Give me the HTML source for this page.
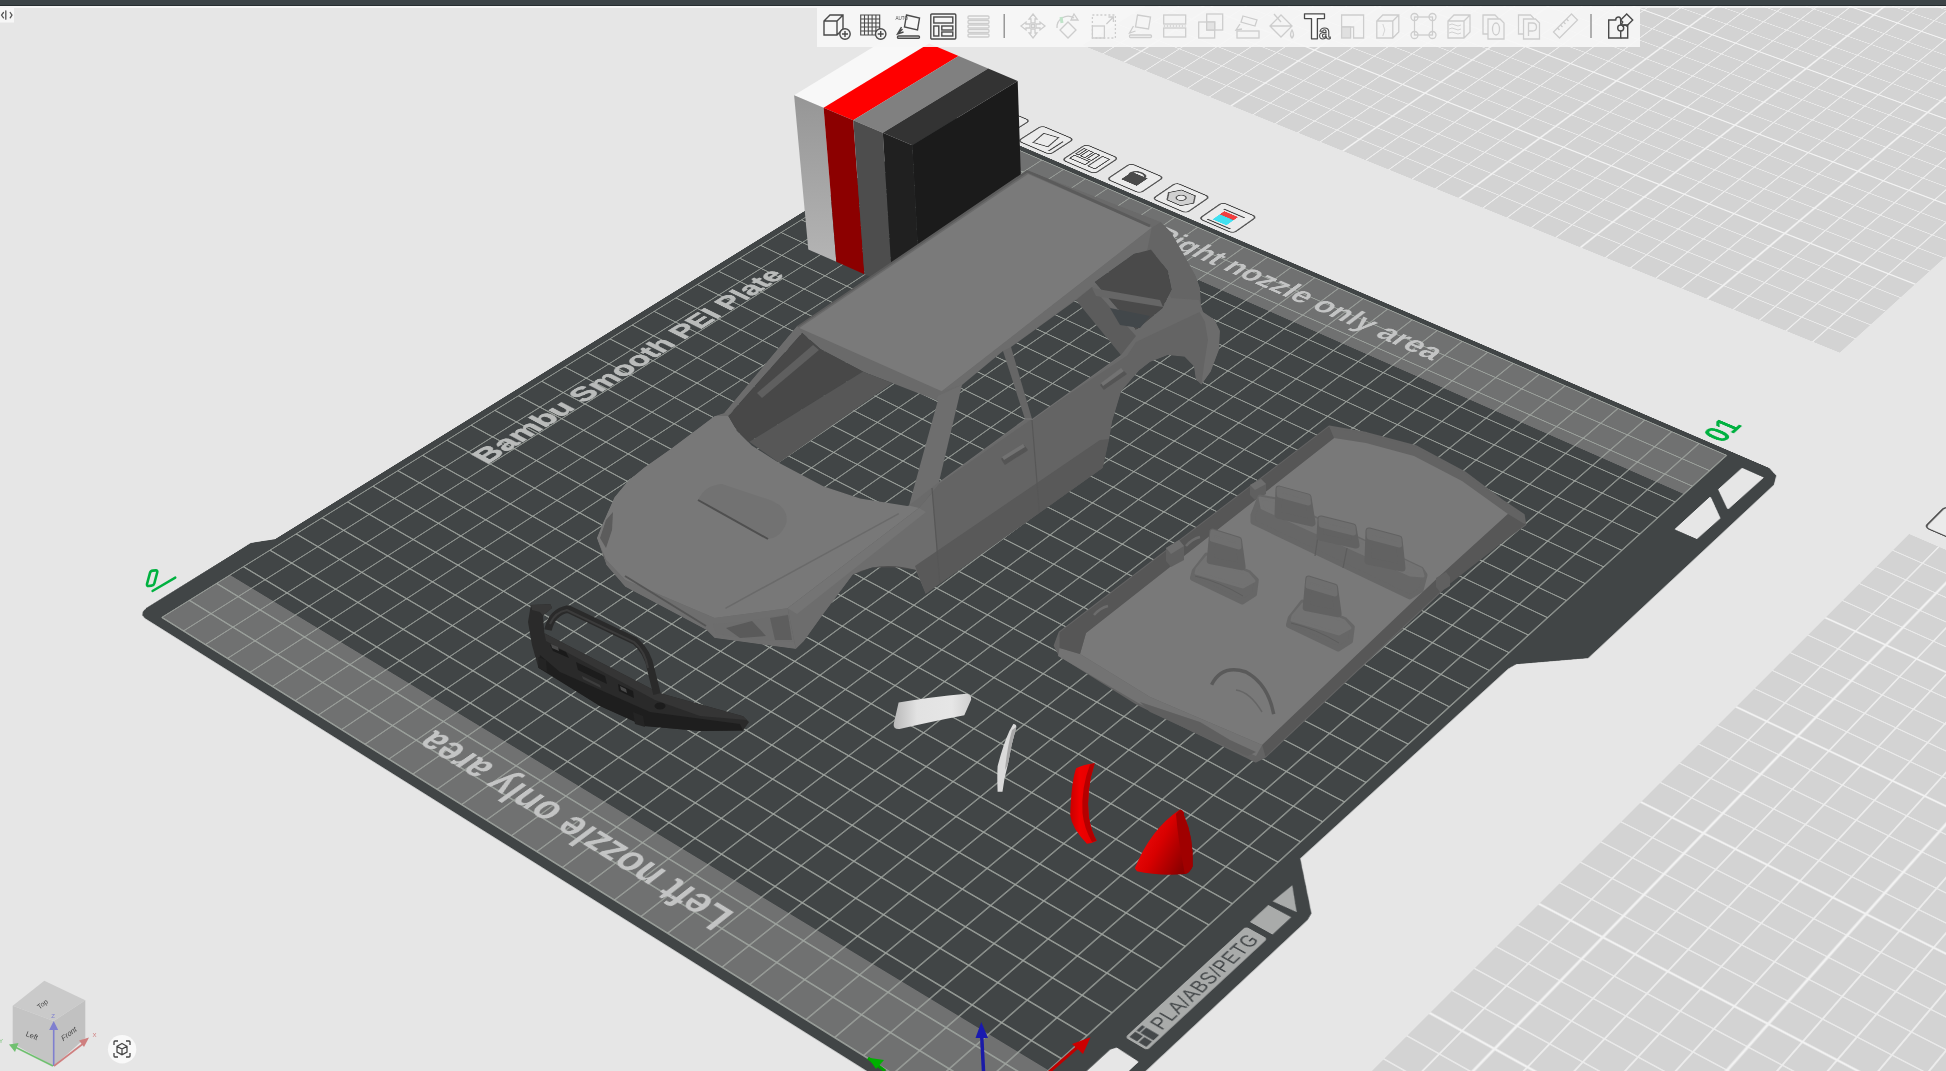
<!DOCTYPE html>
<html><head><meta charset="utf-8"><style>
html,body{margin:0;padding:0;width:1946px;height:1071px;overflow:hidden;}
#root{position:relative;width:1946px;height:1071px;overflow:hidden;}
body{width:1946px;height:1071px;overflow:hidden;position:relative;background:#e6e6e6;font-family:"Liberation Sans",sans-serif;}
#plate{position:absolute;left:0;top:0;width:3320px;height:3120px;transform-origin:0 0;transform:matrix3d(0.7177139837,-0.3331416864,0,0.0001572874842,0.5184865867,0.2595511695,0,-0.0001243992906,0,0,1,0,-7.450086953,615.2132709,0,1);}
#tb{position:absolute;left:817px;top:7px;width:823px;height:40px;background:rgba(246,246,246,0.93);}
#topbar{position:absolute;left:0;top:0;width:1946px;height:5px;background:#3c4447;border-bottom:1px solid #262d30;}
#tline{position:absolute;left:0;top:6px;width:1946px;height:2px;background:rgba(250,250,250,0.75);}
</style></head><body><div id="root">
<div id="plate"><svg width="3320" height="3120" viewBox="-30 -360 830 780" style="display:block"><g transform="scale(1,-1)"><rect x="420" y="0" width="350" height="320" fill="#d3d3d3"/><path d="M430,0V320M440,0V320M450,0V320M460,0V320M480,0V320M490,0V320M500,0V320M510,0V320M530,0V320M540,0V320M550,0V320M560,0V320M580,0V320M590,0V320M600,0V320M610,0V320M630,0V320M640,0V320M650,0V320M660,0V320M680,0V320M690,0V320M700,0V320M710,0V320M730,0V320M740,0V320M750,0V320M760,0V320M420,10H770M420,20H770M420,30H770M420,40H770M420,60H770M420,70H770M420,80H770M420,90H770M420,110H770M420,120H770M420,130H770M420,140H770M420,160H770M420,170H770M420,180H770M420,190H770M420,210H770M420,220H770M420,230H770M420,240H770M420,260H770M420,270H770M420,280H770M420,290H770M420,310H770" stroke="#ececec" stroke-width="0.45" fill="none"/><path d="M470,0V320M520,0V320M570,0V320M620,0V320M670,0V320M720,0V320M420,50H770M420,100H770M420,150H770M420,200H770M420,250H770M420,300H770" stroke="#f2f2f2" stroke-width="0.75" fill="none"/><rect x="0" y="-384" width="350" height="320" fill="#d3d3d3"/><path d="M10,-384V-64M20,-384V-64M30,-384V-64M40,-384V-64M60,-384V-64M70,-384V-64M80,-384V-64M90,-384V-64M110,-384V-64M120,-384V-64M130,-384V-64M140,-384V-64M160,-384V-64M170,-384V-64M180,-384V-64M190,-384V-64M210,-384V-64M220,-384V-64M230,-384V-64M240,-384V-64M260,-384V-64M270,-384V-64M280,-384V-64M290,-384V-64M310,-384V-64M320,-384V-64M330,-384V-64M340,-384V-64M0,-374H350M0,-364H350M0,-354H350M0,-344H350M0,-324H350M0,-314H350M0,-304H350M0,-294H350M0,-274H350M0,-264H350M0,-254H350M0,-244H350M0,-224H350M0,-214H350M0,-204H350M0,-194H350M0,-174H350M0,-164H350M0,-154H350M0,-144H350M0,-124H350M0,-114H350M0,-104H350M0,-94H350M0,-74H350" stroke="#ececec" stroke-width="0.45" fill="none"/><path d="M50,-384V-64M100,-384V-64M150,-384V-64M200,-384V-64M250,-384V-64M300,-384V-64M0,-334H350M0,-284H350M0,-234H350M0,-184H350M0,-134H350M0,-84H350" stroke="#f2f2f2" stroke-width="0.75" fill="none"/><polygon points="-3.30,-19.30 -3.30,323.50 -2.90,325.30 -1.80,326.50 0.00,327.10 38.70,327.30 44.40,323.00 352.50,323.00 352.50,-13.80 350.50,-17.50 346.00,-19.30 242.00,-19.30 227.00,-4.50 224.00,-3.80 124.80,-3.80 110.00,-18.70 107.50,-19.30" fill="#414546"/><polygon points="347.10,-7.40 347.00,-14.70 327.20,-14.40 333.60,-7.30" fill="#e6e6e6" stroke="#e6e6e6" stroke-width="0.6" stroke-linejoin="round"/><polygon points="328.40,-7.30 321.50,-14.80 308.80,-14.60 308.70,-7.30" fill="#e6e6e6" stroke="#e6e6e6" stroke-width="0.6" stroke-linejoin="round"/><polygon points="39.90,-8.00 41.20,-8.70 40.90,-15.70 20.00,-15.70 20.00,-8.00" fill="#e6e6e6" stroke="#e6e6e6" stroke-width="0.6" stroke-linejoin="round"/><rect x="0" y="0" width="25" height="320" fill="#707171"/><rect x="325" y="0" width="25" height="320" fill="#707171"/><path d="M0,0V320M10,0V320M20,0V320M30,0V320M40,0V320M50,0V320M60,0V320M70,0V320M80,0V320M90,0V320M100,0V320M110,0V320M120,0V320M130,0V320M140,0V320M150,0V320M160,0V320M170,0V320M180,0V320M190,0V320M200,0V320M210,0V320M220,0V320M230,0V320M240,0V320M250,0V320M260,0V320M270,0V320M280,0V320M290,0V320M300,0V320M310,0V320M320,0V320M330,0V320M340,0V320M350,0V320M0,0H350M0,10H350M0,20H350M0,30H350M0,40H350M0,50H350M0,60H350M0,70H350M0,80H350M0,90H350M0,100H350M0,110H350M0,120H350M0,130H350M0,140H350M0,150H350M0,160H350M0,170H350M0,180H350M0,190H350M0,200H350M0,210H350M0,220H350M0,230H350M0,240H350M0,250H350M0,260H350M0,270H350M0,280H350M0,290H350M0,300H350M0,310H350M0,320H350" stroke="#a1a6a1" stroke-width="0.42" fill="none"/><rect x="45.5" y="-15.2" width="50" height="7.2" rx="1" fill="#a9abaa"/><polygon points="97.5,-7.8 105.5,-7.8 105.6,-15.3 97.5,-15.3" fill="#a9abaa"/><polygon points="107.3,-7.9 115.3,-8.3 108,-15.3" fill="#a9abaa"/><text transform="matrix(1,0,0,-1,175.5,300.6)" x="0" y="0" font-family="Liberation Sans" font-weight="bold" font-size="11.2" fill="#b9bbba" text-anchor="middle" textLength="133" lengthAdjust="spacingAndGlyphs" stroke="#b9bbba" stroke-width="0.3">Bambu Smooth PEI Plate</text><text transform="matrix(0,-1,-1,0,335,160.5)" x="0" y="0" font-family="Liberation Sans" font-weight="bold" font-size="12.5" fill="#c3c4c4" text-anchor="middle" textLength="118" lengthAdjust="spacingAndGlyphs" >Right nozzle only area</text><text transform="matrix(0,1,1,0,16.3,160)" x="0" y="0" font-family="Liberation Sans" font-weight="bold" font-size="12.5" fill="#c3c4c4" text-anchor="middle" textLength="118" lengthAdjust="spacingAndGlyphs" >Left nozzle only area</text><text transform="matrix(1,0,0,-1,73.5,-13.9)" x="0" y="0" font-family="Liberation Sans" font-weight="normal" font-size="6.2" fill="#44484a" text-anchor="middle" textLength="41" lengthAdjust="spacingAndGlyphs" letter-spacing="0.3">PLA/ABS/PETG</text><g fill="#44484a"><rect x="46.3" y="-14.3" width="2.3" height="2.5"/><rect x="46.3" y="-11.3" width="2.3" height="2.5"/><rect x="49.1" y="-14.3" width="2.3" height="4.2"/><rect x="49.1" y="-9.7" width="2.3" height="0.9"/></g><g><rect x="354.5" y="300.6" width="13" height="14.8" rx="1.6" fill="#ebebeb" stroke="#4a4a4a" stroke-width="0.55"/></g><g><rect x="354.5" y="280.1" width="13" height="14.8" rx="1.6" fill="#ebebeb" stroke="#4a4a4a" stroke-width="0.55"/><path d="M358,284 L365,285 L364,291 L357,290 Z" fill="none" stroke="#4a4a4a" stroke-width="0.5"/><path d="M364,282 L356,282" stroke="#4a4a4a" stroke-width="0.6"/></g><g><rect x="354.5" y="259.6" width="13" height="14.8" rx="1.6" fill="#ebebeb" stroke="#4a4a4a" stroke-width="0.55"/><g fill="none" stroke="#4a4a4a" stroke-width="0.5"><rect x="357" y="261.5" width="8" height="3.2"/><rect x="357" y="266" width="2.5" height="7"/><rect x="360.5" y="266" width="4.5" height="2"/><rect x="360.5" y="269" width="4.5" height="2"/><rect x="360.5" y="272" width="4.5" height="1.2"/></g></g><g><rect x="354.5" y="239.1" width="13" height="14.8" rx="1.6" fill="#ebebeb" stroke="#4a4a4a" stroke-width="0.55"/><rect x="357.5" y="243" width="6" height="7" fill="#4a4a4a"/><path d="M362,250 q3,0 3,-3 q0,-3 -3,-3" fill="none" stroke="#4a4a4a" stroke-width="0.8"/></g><g><rect x="354.5" y="218.6" width="13" height="14.8" rx="1.6" fill="#ebebeb" stroke="#4a4a4a" stroke-width="0.55"/><polygon points="361,220.5 365,223 365,229 361,231.5 357,229 357,223" fill="#d0d0d0" stroke="#4a4a4a" stroke-width="0.5"/><circle cx="361" cy="226" r="1.7" fill="#ebebeb" stroke="#4a4a4a" stroke-width="0.45"/></g><g><rect x="354.5" y="198.1" width="13" height="14.8" rx="1.6" fill="#ebebeb" stroke="#4a4a4a" stroke-width="0.55"/><rect x="357" y="203" width="4" height="6" fill="#40e0f0"/><rect x="361" y="203" width="2.5" height="6" fill="#f04040"/><path d="M356,200.5 V210.5 M364.5,201 V210" stroke="#4a4a4a" stroke-width="0.6"/><circle cx="361" cy="204" r="0.1"/></g><g><rect x="355.8" y="-80.9" width="13" height="14.8" rx="1.6" fill="#ebebeb" stroke="#4a4a4a" stroke-width="0.55"/><path d="M358,-76 L364,-70" stroke="#4a4a4a" stroke-width="0.6"/></g><text transform="matrix(1,0,0,-1,360.5,4.2)" x="0" y="0" font-family="Liberation Sans" font-weight="bold" font-size="11" fill="#00b140" text-anchor="middle" textLength="12" lengthAdjust="spacingAndGlyphs" >01</text></g></svg></div>
<svg id="obj" width="1946" height="1071" style="position:absolute;left:0;top:0"><path d="M147,584 L150,572.8 Q150.5,570.8 153,570.6 L155.8,570.4 Q157.8,570.4 157.2,572.5 L154.3,583.5 Q153.8,585.4 151.6,585.6 L148.8,586 Q146.6,586.2 147,584 Z" fill="none" stroke="#00b140" stroke-width="2.6"/><path d="M152.5,591 L175.3,577.6" stroke="#00b140" stroke-width="2.4" stroke-linecap="round"/><path d="M983.5,1071 L981.6,1034" stroke="#1a1aa8" stroke-width="3.5"/><polygon points="975.5,1038.0 981.3,1021.9 988.0,1038.0" fill="#1a1ab0" /><path d="M1040,1080 L1080,1045" stroke="#c00000" stroke-width="3"/><polygon points="1072.0,1044.0 1090.5,1037.3 1083.0,1054.0" fill="#cc0000" /><path d="M868,1058 L885,1071" stroke="#00a000" stroke-width="3"/><polygon points="868.3,1057.8 884.0,1060.0 876.0,1069.0" fill="#00b000" /><polygon points="530.9,605.0 550.3,604.2 552.0,608.0 542.9,615.4 544.4,633.3 659.4,693.1 743.1,716.3 749.0,722.0 743.1,730.5 700.0,731.0 644.5,726.0 600.0,706.0 538.4,667.7 532.0,645.0 528.0,622.0" fill="#2a2a2a" /><polygon points="544.4,633.3 659.4,693.1 743.1,716.3 747.0,720.0 700.0,716.0 655.0,700.0 546.0,641.0" fill="#353535" /><polygon points="530.9,605.0 550.3,604.2 552.0,608.0 542.9,615.4 540.0,612.0 532.0,610.0" fill="#383838" /><polygon points="538.4,667.7 600.0,706.0 644.5,726.0 700.0,731.0 743.1,730.5 740.0,724.0 650.0,712.0 560.0,672.0 540.0,655.0" fill="#1e1e1e" /><polygon points="550.0,645.0 566.0,652.0 569.0,658.0 553.0,651.0" fill="#1a1a1a" /><polygon points="551.0,644.0 558.0,647.0 559.0,651.0 552.0,648.0" fill="#4a4a4a" /><polygon points="576.0,662.0 605.0,676.0 607.0,684.0 578.0,670.0" fill="#1c1c1c" /><polygon points="582.0,676.0 600.0,685.0 601.0,688.0 583.0,679.0" fill="#3c3c3c" /><polygon points="618.0,684.0 633.0,691.0 634.0,698.0 619.0,691.0" fill="#1a1a1a" /><polygon points="620.0,686.0 626.0,689.0 627.0,693.0 621.0,690.0" fill="#4a4a4a" /><ellipse cx="660" cy="706" rx="5.5" ry="3.5" fill="#1c1c1c"/><path d="M548,630 Q552,612 568,609 L635,641 Q648,652 651,670 L657,694" stroke="#2a2a2a" stroke-width="7.5" fill="none" stroke-linejoin="round"/><path d="M550,624 Q555,612 567,610 L634,642 Q645,651 648,668" stroke="#3b3b3b" stroke-width="2" fill="none"/><polygon points="538.0,657.0 546.0,660.0 547.0,672.0 539.0,668.0" fill="#242424" /><polygon points="633.0,712.0 643.0,716.0 645.0,727.0 635.0,724.0" fill="#242424" /><defs><linearGradient id="wg" x1="0" y1="0" x2="1" y2="0"><stop offset="0" stop-color="#b9b9b9"/><stop offset="0.3" stop-color="#e2e2e2"/><stop offset="0.75" stop-color="#e6e6e6"/><stop offset="1" stop-color="#cfcfcf"/></linearGradient><linearGradient id="rg2" x1="0" y1="0" x2="1" y2="0.6"><stop offset="0" stop-color="#ff1010"/><stop offset="0.55" stop-color="#d80000"/><stop offset="1" stop-color="#8c0000"/></linearGradient><linearGradient id="rg1" x1="0" y1="0" x2="1" y2="0"><stop offset="0" stop-color="#c80000"/><stop offset="0.35" stop-color="#f00000"/><stop offset="1" stop-color="#e00000"/></linearGradient></defs><path d="M898.6,702.5 Q930,697 966.3,693.7 Q971.5,694 971.2,699.6 L964.3,715.3 Q930,722 899.6,729 Q893,729.5 893.7,724 Z" fill="url(#wg)"/><path d="M1013.3,724.1 Q1016.5,724.5 1016.3,727 Q1011,745 1008,764 Q1004,778 1002.5,791.8 L997.6,791.8 Q997,776 997.6,766.3 Q1003,745 1009.4,731 Z" fill="#dadada"/><path d="M1016.3,727 Q1011,745 1008,764 L1005,770 Q1007,748 1012,730 Z" fill="#a8a8a8"/><path d="M1076.1,768.2 Q1083.9,764.3 1094.7,763.3 Q1085.9,789.8 1088.8,817.3 Q1091.8,832.9 1096.7,840.8 Q1091.8,843.7 1086.9,843.7 Q1072.2,829 1070.2,815.3 Q1071.2,782 1076.1,768.2 Z" fill="url(#rg1)"/><path d="M1094.7,763.3 Q1085.9,789.8 1088.8,817.3 Q1091.8,832.9 1096.7,840.8 L1092,842 Q1084,828 1082.5,813 Q1081,788 1090,764.5 Z" fill="#b40000"/><path d="M1134.9,868.2 Q1150.6,829 1180,809.4 Q1184.9,811.4 1183.9,815.3 Q1193.7,836.9 1192.7,866.3 Q1189.8,873.1 1184.9,874.1 Q1158.4,876.1 1136.9,871.2 Z" fill="url(#rg2)"/><path d="M1180,809.4 Q1184.9,811.4 1183.9,815.3 Q1193.7,836.9 1192.7,866.3 Q1189.8,873.1 1184.9,874.1 Q1178,840 1176,814 Z" fill="#a00000"/><polygon points="1329.2,426.5 1366.8,433.1 1415.8,446.1 1464.8,472.3 1504.0,501.7 1523.7,514.8 1525.3,524.6 1455.0,573.6 1442.0,590.0 1435.4,596.5 1265.5,756.6 1255.7,761.5 1245.9,756.6 1138.0,704.3 1059.6,655.3 1054.7,645.5 1059.6,632.4" fill="#636363" stroke="#636363" stroke-width="2" stroke-linejoin="round"/><polygon points="1086.0,633.0 1334.0,438.0 1366.0,443.0 1414.0,456.0 1462.0,481.0 1508.0,514.0 1438.7,576.9 1262.2,745.0 1150.0,697.0 1080.0,654.0" fill="#797979" /><polygon points="1059.6,648.0 1080.0,654.0 1150.0,697.0 1262.2,745.0 1256.0,756.0 1140.0,704.0 1058.0,656.0" fill="#737373" /><polygon points="1140.0,702.0 1200.0,722.0 1230.0,740.0 1256.0,752.0 1248.0,756.0 1200.0,735.0 1150.0,712.0" fill="#5f5f5f" /><polygon points="1508.0,514.0 1525.3,524.6 1442.0,590.0 1265.5,756.6 1262.2,745.0 1438.7,576.9" fill="#575757" /><polygon points="1059.6,632.4 1329.2,426.5 1334.0,438.0 1086.0,633.0 1080.0,654.0 1059.6,648.0" fill="#565656" /><path d="M1094,615 Q1100,608 1108,606 M1186,546 Q1192,539 1200,537" stroke="#6c6c6c" stroke-width="2.5" fill="none"/><polygon points="1166.0,548.0 1179.0,540.0 1184.0,546.0 1184.0,560.0 1171.0,567.0 1166.0,561.0" fill="#606060" /><polygon points="1166.0,548.0 1179.0,540.0 1184.0,546.0 1171.0,554.0" fill="#6e6e6e" /><polygon points="1250.0,485.0 1261.0,479.0 1266.0,484.0 1266.0,494.0 1255.0,500.0 1250.0,495.0" fill="#606060" /><polygon points="1250.0,485.0 1261.0,479.0 1266.0,484.0 1255.0,490.0" fill="#6e6e6e" /><polygon points="1436.0,578.0 1446.0,572.0 1450.0,577.0 1450.0,586.0 1440.0,592.0 1436.0,587.0" fill="#606060" /><polygon points="1253.0,515.0 1260.0,497.0 1276.0,500.0 1421.0,569.0 1425.0,575.0 1421.0,590.0 1410.0,597.0 1253.0,522.0" fill="#676767" stroke="#676767" stroke-width="5" stroke-linejoin="round"/><polygon points="1260.0,498.0 1276.0,501.0 1421.0,569.0 1423.0,576.0 1410.0,575.0 1262.0,508.0" fill="#737373" stroke="#737373" stroke-width="3" stroke-linejoin="round"/><path d="M1318,536 L1315,556 M1347,548 L1343,568" stroke="#5c5c5c" stroke-width="1.2"/><polygon points="1279.0,489.0 1308.0,497.0 1312.0,523.0 1278.0,515.0" fill="#626262" stroke="#626262" stroke-width="7" stroke-linejoin="round"/><polygon points="1279.0,489.0 1308.0,497.0 1308.5,503.0 1279.2,495.0" fill="#6f6f6f" stroke="#6f6f6f" stroke-width="5" stroke-linejoin="round"/><polygon points="1369.0,531.0 1399.0,539.0 1402.0,568.0 1368.0,561.0" fill="#626262" stroke="#626262" stroke-width="7" stroke-linejoin="round"/><polygon points="1369.0,531.0 1399.0,539.0 1399.5,545.0 1369.2,537.0" fill="#6f6f6f" stroke="#6f6f6f" stroke-width="5" stroke-linejoin="round"/><polygon points="1321.0,519.0 1353.0,527.0 1356.0,545.0 1320.0,537.0" fill="#626262" stroke="#626262" stroke-width="7" stroke-linejoin="round"/><polygon points="1321.0,519.0 1353.0,527.0 1353.5,533.0 1321.2,525.0" fill="#6f6f6f" stroke="#6f6f6f" stroke-width="5" stroke-linejoin="round"/><polygon points="1194.2,571.1 1206.6,555.1 1249.2,572.9 1256.3,580.0 1254.5,594.2 1242.1,602.1 1192.4,578.2" fill="#676767" stroke="#676767" stroke-width="5" stroke-linejoin="round"/><polygon points="1197.0,569.0 1207.0,557.0 1248.0,574.0 1254.0,581.0 1243.0,587.0 1196.0,573.0" fill="#727272" stroke="#727272" stroke-width="3" stroke-linejoin="round"/><path d="M1195,576 Q1220,582 1243,596" stroke="#5c5c5c" stroke-width="1" fill="none"/><polygon points="1212.8,532.1 1238.5,540.1 1242.1,566.7 1210.2,560.5" fill="#626262" stroke="#626262" stroke-width="7" stroke-linejoin="round"/><polygon points="1212.8,532.1 1238.5,540.1 1239.0,547.0 1212.0,539.0" fill="#6f6f6f" stroke="#6f6f6f" stroke-width="5" stroke-linejoin="round"/><polygon points="1290.2,618.1 1302.6,602.1 1345.2,619.9 1352.3,627.0 1350.5,641.2 1338.1,649.1 1288.4,625.2" fill="#676767" stroke="#676767" stroke-width="5" stroke-linejoin="round"/><polygon points="1293.0,616.0 1303.0,604.0 1344.0,621.0 1350.0,628.0 1339.0,634.0 1292.0,620.0" fill="#727272" stroke="#727272" stroke-width="3" stroke-linejoin="round"/><path d="M1291,623 Q1316,629 1339,643" stroke="#5c5c5c" stroke-width="1" fill="none"/><polygon points="1308.8,579.1 1334.5,587.1 1338.1,613.7 1306.2,607.5" fill="#626262" stroke="#626262" stroke-width="7" stroke-linejoin="round"/><polygon points="1308.8,579.1 1334.5,587.1 1335.0,594.0 1308.0,586.0" fill="#6f6f6f" stroke="#6f6f6f" stroke-width="5" stroke-linejoin="round"/><path d="M1211.6,684.7 Q1222,664 1246,672 Q1268,684 1273.7,714.1" stroke="#5a5a5a" stroke-width="3.5" fill="none"/><path d="M1236,690 Q1250,692 1262,712" stroke="#666" stroke-width="1.5" fill="none"/><defs><linearGradient id="cubew" x1="0" y1="0" x2="0" y2="1"><stop offset="0" stop-color="#969696"/><stop offset="1" stop-color="#b4b4b4"/></linearGradient></defs><polygon points="794.1,95.2 823.6,107.7 929.1,43.5 899.5,31.0" fill="#f8f8f8" /><polygon points="794.1,95.2 823.6,107.7 836.3,261.8 808.3,249.4" fill="url(#cubew)" /><polygon points="823.6,107.7 853.2,120.2 958.6,56.0 929.1,43.5" fill="#ff0000" /><polygon points="823.6,107.7 853.2,120.2 864.4,274.2 836.3,261.8" fill="#8c0000" /><polygon points="853.2,120.2 882.8,132.8 988.2,68.6 958.6,56.0" fill="#808080" /><polygon points="853.2,120.2 882.8,132.8 892.5,286.6 864.4,274.2" fill="#4d4d4d" /><polygon points="882.8,132.8 912.3,145.3 1017.7,81.1 988.2,68.6" fill="#333333" /><polygon points="882.8,132.8 912.3,145.3 920.5,299.0 892.5,286.6" fill="#202020" /><polygon points="912.3,145.3 1017.7,81.1 1022.5,225.0 920.5,299.0" fill="#1b1b1b" /><defs><mask id="carmask" maskUnits="userSpaceOnUse" x="0" y="0" width="1946" height="1071"><polygon points="596.8,537.9 603.5,521.7 614.4,497.3 627.9,481.0 644.2,467.5 671.3,448.5 714.6,416.0 724.1,413.0 797.0,326.0 1027.0,170.0 1161.0,222.0 1171.0,232.0 1184.6,256.0 1195.8,276.0 1200.0,288.0 1201.0,305.0 1203.2,312.0 1214.4,319.5 1220.0,330.7 1219.1,349.4 1210.7,371.8 1201.4,384.8 1195.8,379.2 1193.9,366.2 1184.6,356.8 1167.8,355.0 1150.0,362.0 1139.1,370.4 1121.2,391.3 1112.2,421.2 1109.2,439.1 1102.8,468.0 925.6,594.1 915.9,569.9 896.5,567.4 872.2,567.4 852.8,574.7 823.7,613.6 804.0,640.9 795.9,649.0 714.6,638.1 706.5,630.0 625.2,586.7 606.3,565.0" fill="#fff" /><polygon points="802.2,332.9 820.7,349.3 863.8,371.9 937.8,400.7 909.0,505.5 907.2,505.9 860.3,498.5 823.3,486.2 778.9,462.8 751.8,445.5 737.0,430.7 728.4,415.9" fill="#000" /><polygon points="962.0,385.0 1003.0,351.0 1025.0,419.0 939.0,482.0" fill="#000" /><polygon points="1011.0,347.0 1076.0,300.0 1121.0,355.0 1032.0,419.0" fill="#000" /><polygon points="1094.9,282.1 1134.0,254.0 1151.0,249.5 1167.8,271.0 1171.5,289.6 1162.2,308.3 1136.0,330.0" fill="#000" /></mask></defs><g mask="url(#carmask)"><polygon points="596.8,537.9 603.5,521.7 614.4,497.3 627.9,481.0 644.2,467.5 671.3,448.5 714.6,416.0 724.1,413.0 797.0,326.0 1027.0,170.0 1161.0,222.0 1171.0,232.0 1184.6,256.0 1195.8,276.0 1200.0,288.0 1201.0,305.0 1203.2,312.0 1214.4,319.5 1220.0,330.7 1219.1,349.4 1210.7,371.8 1201.4,384.8 1195.8,379.2 1193.9,366.2 1184.6,356.8 1167.8,355.0 1150.0,362.0 1139.1,370.4 1121.2,391.3 1112.2,421.2 1109.2,439.1 1102.8,468.0 925.6,594.1 915.9,569.9 896.5,567.4 872.2,567.4 852.8,574.7 823.7,613.6 804.0,640.9 795.9,649.0 714.6,638.1 706.5,630.0 625.2,586.7 606.3,565.0" fill="#6a6a6a" /><polygon points="799.4,328.0 1028.1,174.0 1151.8,227.7 941.8,391.3" fill="#7a7a7a" /><polyline points="797.0,326.0 1027.0,171.0 1150.0,226.0" fill="none" stroke="#5b5b5b" stroke-width="3"/><polygon points="596.8,537.9 603.5,521.7 614.4,497.3 627.9,481.0 644.2,467.5 671.3,448.5 714.6,416.0 728.4,415.9 737.0,430.7 751.8,445.5 778.9,462.8 823.3,486.2 860.3,498.5 909.0,505.5 919.1,508.1 787.7,608.3 714.6,618.0 625.2,580.0 606.3,560.0" fill="#787878" /><path d="M898.8,513.6 L725.4,608.3" stroke="#6a6a6a" stroke-width="1.5" fill="none"/><polygon points="606.3,560.0 625.2,580.0 714.6,618.0 787.7,608.3 795.9,649.0 714.6,638.1 706.5,630.0 625.2,586.7 606.3,565.0" fill="#6e6e6e" /><path d="M625,576 L706,626" stroke="#555" stroke-width="2" fill="none"/><polygon points="713.0,624.0 742.0,622.0 788.0,614.0 794.0,642.0 760.0,640.0 716.0,634.0" fill="#6d6d6d" /><polygon points="726.0,628.0 752.0,621.0 766.0,636.0 740.0,638.0" fill="#5a5a5a" /><polygon points="770.0,618.0 788.0,615.0 792.0,640.0 775.0,640.0" fill="#5e5e5e" /><polygon points="600.0,538.0 606.0,520.0 613.0,512.0 612.0,530.0 606.0,548.0" fill="#5c5c5c" /><path d="M698,500 Q705,485 722,484 L770,500 Q790,508 786,524 Q780,538 768,539 Z" fill="#727272"/><path d="M698,500 L768,539" stroke="#4f4f4f" stroke-width="2" fill="none"/><polygon points="787.7,608.3 919.1,508.1 938.9,484.0 1028.5,421.2 1127.2,355.4 1136.0,341.9 1199.5,312.0 1203.2,312.0 1214.4,319.5 1220.0,330.7 1219.1,349.4 1210.7,371.8 1201.4,384.8 1195.8,379.2 1193.9,366.2 1184.6,356.8 1167.8,355.0 1150.0,362.0 1139.1,370.4 1121.2,391.3 1112.2,421.2 1109.2,439.1 1102.8,468.0 925.6,594.1 915.9,569.9 896.5,567.4 872.2,567.4 852.8,574.7 823.7,613.6 804.0,640.9 795.9,649.0" fill="#646464" /><polygon points="1199.5,312.0 1203.2,312.0 1214.4,319.5 1220.0,330.7 1219.1,349.4 1210.7,371.8 1201.4,384.8 1204.0,365.0 1208.0,340.0 1205.0,322.0" fill="#6c6c6c" /><polygon points="787.7,608.3 919.1,508.1 932.0,493.0 938.0,565.0 925.6,594.1 915.9,569.9 896.5,567.4 872.2,567.4 852.8,574.7 823.7,613.6 804.0,640.9 795.9,649.0" fill="#6d6d6d" /><polygon points="787.7,608.3 919.1,508.1 926.0,512.0 797.0,614.0" fill="#747474" /><polygon points="925.6,594.1 1102.8,468.0 1109.2,439.1 1100.0,440.0 915.0,566.0" fill="#595959" /><path d="M852.8,574.7 Q880,560 915.9,569.9 L925.6,594.1 L915,590 Q905,575 880,574 Z" fill="#4e4e4e"/><path d="M932,488 L940,585 M1032,420 L1040,520" stroke="#575757" stroke-width="1.2" fill="none"/><polygon points="1002.0,459.0 1024.0,446.0 1027.0,450.0 1005.0,464.0" fill="#555555" stroke="#555" stroke-width="1.5" stroke-linejoin="round"/><polygon points="1002.0,457.0 1023.0,444.0 1025.0,447.0 1004.0,460.0" fill="#727272" /><polygon points="1101.0,385.0 1122.0,370.0 1126.0,374.0 1104.0,389.0" fill="#555555" stroke="#555" stroke-width="1.5" stroke-linejoin="round"/><polygon points="1101.0,383.0 1121.0,368.0 1124.0,371.0 1103.0,386.0" fill="#727272" /><polygon points="941.8,391.3 1151.8,227.7 1149.0,250.0 1092.0,287.0 1011.0,347.0 962.0,385.0" fill="#6c6c6c" /><polygon points="1151.8,227.7 1161.0,222.0 1171.0,232.0 1184.6,256.0 1195.8,276.0 1200.0,288.0 1201.0,305.0 1198.9,300.0 1171.0,298.0 1147.0,251.0" fill="#656565" /><polygon points="937.8,396.0 962.0,385.0 939.0,482.0 909.0,505.5" fill="#6e6e6e" /><polygon points="724.1,413.0 797.0,326.0 802.2,332.9 728.2,415.1" fill="#6c6c6c" /><polygon points="1003.0,351.0 1011.0,347.0 1032.0,419.0 1025.0,419.0" fill="#666666" /><polygon points="1076.0,300.0 1092.0,287.0 1136.0,336.0 1121.0,355.0" fill="#5c5c5c" /><path d="M939,482 L1025,419 L1032,419 L1121,355" stroke="#707070" stroke-width="2" fill="none"/></g><clipPath id="wsclip"><polygon points="802.2,332.9 820.7,349.3 863.8,371.9 937.8,400.7 909.0,505.5 907.2,505.9 860.3,498.5 823.3,486.2 778.9,462.8 751.8,445.5 737.0,430.7 728.4,415.9"/></clipPath><g clip-path="url(#wsclip)"><polygon points="700.0,460.0 749.3,441.8 914.0,340.0 760.0,300.0 700.0,380.0" fill="#484848" /><polygon points="749.3,441.8 914.0,340.0 953.6,340.0 778.9,462.8" fill="#575757" /></g><polygon points="757.0,393.0 813.0,345.0 819.0,350.0 762.0,398.0" fill="#5f5f5f" /><polygon points="1094.9,282.1 1134.0,254.0 1151.0,249.5 1167.8,271.0 1171.5,289.6 1162.2,308.3 1136.0,330.0" fill="#4a4a4a" /><polygon points="1092.0,288.0 1160.0,300.0 1163.0,307.0 1096.0,296.0" fill="#666666" /><polygon points="1110.0,308.0 1150.0,316.0 1140.0,328.0 1120.0,325.0" fill="#42474a" /><polygon points="12.7,1005.8 44.3,980.8 85.3,1000.2 53.7,1021.0" fill="#cacaca"/><polygon points="12.7,1005.8 53.7,1021.0 53.7,1066.2 12.7,1043.5" fill="#c4c4c4"/><polygon points="53.7,1021.0 85.3,1000.2 85.3,1037.9 53.7,1066.2" fill="#c1c1c1"/><text transform="translate(44,1006) rotate(-38)" font-size="7" fill="#444" font-family="Liberation Sans" text-anchor="middle">Top</text><text transform="translate(31,1038) rotate(22)" font-size="7.5" fill="#444" font-family="Liberation Sans" text-anchor="middle">Left</text><text transform="translate(70,1036) rotate(-38) skewX(-15)" font-size="7.5" fill="#444" font-family="Liberation Sans" text-anchor="middle">Front</text><path d="M53.7,1066 V1026" stroke="#7f7fcf" stroke-width="1.6"/><polygon points="49.2,1030 53.7,1021 58.2,1030" fill="#7f7fcf"/><path d="M54,1066 L84,1043" stroke="#cf7f7f" stroke-width="1.6"/><polygon points="79,1040.5 89,1037.5 84,1047" fill="#cf7f7f"/><path d="M53,1066 L15,1047" stroke="#70c070" stroke-width="1.6"/><polygon points="9,1044.5 18.5,1043 15,1052" fill="#70c070"/><text x="53" y="1018" font-size="6" fill="#7f7fcf" font-family="Liberation Sans" text-anchor="middle">Z</text><text x="94.5" y="1037" font-size="6" fill="#cf7f7f" font-family="Liberation Sans" text-anchor="middle">X</text><text x="1" y="1043" font-size="6" fill="#70c070" font-family="Liberation Sans" text-anchor="middle">Y</text><circle cx="122.1" cy="1049.2" r="14.2" fill="#f9f9f9"/><g fill="none" stroke="#444" stroke-width="1.3"><path d="M114,1045 V1042 Q114,1041 115,1041 H118 M126,1041 H129 Q130,1041 130,1042 V1045 M130,1053 V1056 Q130,1057 129,1057 H126 M118,1057 H115 Q114,1057 114,1056 V1053"/><path d="M122,1043.5 L127,1046.3 V1052 L122,1054.8 L117,1052 V1046.3 Z M117,1046.3 L122,1049 L127,1046.3 M122,1049 V1054.8"/></g><rect x="0" y="8" width="14" height="14.5" fill="#f7f7f7"/><g fill="none" stroke="#555" stroke-width="1.3" stroke-linecap="round" stroke-linejoin="round"><path d="M3.5,12.5 L1.5,15.2 L3.5,17.8 M10.2,12.5 L12,15.2 L10.2,17.8 M5.8,10.8 V19.2"/></g></svg>
<div id="topbar"></div><div id="tline"></div>
<div id="tb"></div>
<svg id="tbi" width="1946" height="60" style="position:absolute;left:0;top:0"><g transform="translate(822,12)"><g fill="none" stroke="#4a4a4a" stroke-width="1.4"><path d="M2,9 L8,3 L21,3 L21,17 L15,23 L2,23 Z M2,9 L15,9 L21,3 M15,9 L15,23"/><circle cx="23" cy="22" r="5.2" fill="#f4f4f4"/><path d="M23,19 V25 M20,22 H26"/></g></g><g transform="translate(857.7,12)"><g fill="none" stroke="#4a4a4a" stroke-width="1.1"><path d="M3,3 H22 V23 H3 ZM6.8,3 V23M10.6,3 V23M14.4,3 V23M18.2,3 V23M3,7.0 H22M3,11.0 H22M3,15.0 H22M3,19.0 H22"/><circle cx="23" cy="22" r="5.2" fill="#f4f4f4" stroke-width="1.4"/><path d="M23,19 V25 M20,22 H26" stroke-width="1.4"/></g></g><g transform="translate(893.5,12)"><g fill="none" stroke="#4a4a4a" stroke-width="1.4"><path d="M13,3 L26,6 L24,18 L11,15 Z"/><path d="M8,15 L4,22 L10,20 M4,22 L9,17"/><rect x="4" y="24" width="22" height="2.2" rx="1"/></g><text x="2" y="8" font-size="4.5" fill="#4a4a4a" font-family="Liberation Sans">AUTO</text></g><g transform="translate(928.8,12)"><g fill="none" stroke="#4a4a4a" stroke-width="1.4"><rect x="2" y="2" width="25" height="25" rx="1"/><rect x="5" y="5" width="19" height="6"/><rect x="5" y="14" width="5" height="10"/><rect x="13" y="14" width="11" height="4"/><rect x="13" y="20" width="11" height="4"/></g></g><g transform="translate(964,12)"><g fill="none" stroke="#cdcdcd" stroke-width="1.3"><rect x="4" y="4.0" width="21" height="3" rx="1"/><rect x="4" y="8.5" width="21" height="3" rx="1"/><rect x="4" y="13.0" width="21" height="3" rx="1"/><rect x="4" y="17.5" width="21" height="3" rx="1"/><rect x="4" y="22.0" width="21" height="3" rx="1"/></g></g><path d="M1004.2,14 V38" stroke="#8a8a8a" stroke-width="1.3"/><g transform="translate(1019,12)"><g fill="none" stroke="#cdcdcd" stroke-width="1.3"><path d="M14,2 L18,7 H16 V11 H12 V7 H10 Z M14,26 L18,21 H16 V17 H12 V21 H10 Z M2,14 L7,10 V12 H11 V16 H7 V18 Z M26,14 L21,10 V12 H17 V16 H21 V18 Z"/><rect x="12.5" y="12.5" width="3" height="3"/></g></g><g transform="translate(1054,12)"><g fill="none" stroke="#cdcdcd" stroke-width="1.3"><path d="M14,10 L22,18 L14,26 L6,18 Z"/><path d="M3,16 A11,11 0 0 1 20,6"/><path d="M20,2 L24,8 L17,8 Z"/><path d="M7,5 L8,11" stroke="#bfe3c8" stroke-width="3"/></g></g><g transform="translate(1089.4,12)"><g fill="none" stroke="#cdcdcd" stroke-width="1.3"><rect x="3" y="3" width="23" height="23" stroke-dasharray="2,2"/><rect x="3" y="14" width="12" height="12"/><path d="M17,12 L24,5 M19,5 H24 V10"/></g></g><g transform="translate(1125.5,12)"><g fill="none" stroke="#cdcdcd" stroke-width="1.3"><path d="M12,3 L25,5 L23,17 L10,15 Z"/><path d="M8,14 L4,21 L10,19"/><rect x="4" y="23" width="22" height="2.5" rx="1"/></g></g><g transform="translate(1160.7,12)"><g fill="none" stroke="#cdcdcd" stroke-width="1.3"><rect x="3" y="3" width="22" height="9"/><rect x="3" y="16" width="22" height="9"/><path d="M3,14 H25" stroke-dasharray="1.5,1.5"/></g></g><g transform="translate(1196.7,12)"><g fill="none" stroke="#cdcdcd" stroke-width="1.3"><rect x="2" y="10" width="16" height="16"/><rect x="10" y="2" width="16" height="16"/><rect x="10" y="10" width="8" height="8" fill="#e3e3e3"/></g></g><g transform="translate(1233,12)"><g fill="none" stroke="#cdcdcd" stroke-width="1.3"><path d="M10,4 L24,8 L22,14 L8,10 Z"/><path d="M7,12 L3,18 L9,17"/><rect x="4" y="19" width="22" height="7"/></g></g><g transform="translate(1268,12)"><g fill="none" stroke="#cdcdcd" stroke-width="1.3"><path d="M2,14 L13,3 L24,14 L13,25 Z M2,14 H24"/><path d="M6,2 L13,10"/><path d="M24,18 Q21,23 24,26 Q27,23 24,18 Z"/></g></g><g transform="translate(1303,12)"><g fill="#fafafa" stroke="#4a4a4a" stroke-width="1.3" stroke-linejoin="round"><path d="M1.5,1.8 H21.5 V6.6 H14.4 V26.8 H8.5 V6.6 H1.5 Z"/></g><text x="16" y="27" font-size="20" font-weight="bold" fill="#fafafa" stroke="#4a4a4a" stroke-width="1.1" font-family="Liberation Sans">a</text></g><g transform="translate(1338.6,12)"><g fill="none" stroke="#cdcdcd" stroke-width="1.3"><path d="M3,3 H25 V26 H15 V15 H3 Z"/><rect x="3" y="15" width="9" height="11" fill="#e0e0e0"/></g></g><g transform="translate(1373.8,12)"><g fill="none" stroke="#cdcdcd" stroke-width="1.3"><path d="M3,9 L9,3 H25 V20 L19,26 H3 Z M3,9 H19 L25,3 M19,9 V26"/><path d="M9,12 L11,18 L9,24" stroke-width="0.8"/></g></g><g transform="translate(1409.5,12)"><g fill="none" stroke="#cdcdcd" stroke-width="1.3"><rect x="5" y="5" width="18" height="18"/><circle cx="5" cy="5" r="3.5"/><circle cx="23" cy="5" r="3.5"/><circle cx="5" cy="23" r="3.5"/><circle cx="23" cy="23" r="3.5"/></g></g><g transform="translate(1445,12)"><g fill="none" stroke="#cdcdcd" stroke-width="1.3"><path d="M3,9 L9,3 H25 V20 L19,26 H3 Z M3,9 H19 L25,3 M19,9 V26"/><path d="M4,13 q3,-2 6,0 t6,0 M4,17 q3,-2 6,0 t6,0 M4,21 q3,-2 6,0 t6,0" stroke-width="0.9"/></g></g><g transform="translate(1480,12)"><g fill="none" stroke="#cdcdcd" stroke-width="1.3"><path d="M3,3 H15 L18,6 V22 H3 Z"/><path d="M8,7 H20 L24,11 V27 H8 Z" fill="#f4f4f4"/><ellipse cx="16" cy="17" rx="3.5" ry="6"/></g></g><g transform="translate(1515.5,12)"><g fill="none" stroke="#cdcdcd" stroke-width="1.3"><path d="M3,3 H15 L18,6 V22 H3 Z"/><path d="M8,7 H20 L24,11 V27 H8 Z" fill="#f4f4f4"/><path d="M13,24 V11 H17 Q21,11 21,15 Q21,19 17,19 H13"/></g></g><g transform="translate(1551.5,12)"><g fill="none" stroke="#cdcdcd" stroke-width="1.3"><path d="M2,20 L20,2 L26,8 L8,26 Z"/><path d="M6,16 L8,18 M9,13 L11,15 M12,10 L14,12 M15,7 L17,9"/></g></g><path d="M1591,14 V38" stroke="#8a8a8a" stroke-width="1.3"/><g transform="translate(1605.7,12)"><g fill="none" stroke="#4a4a4a" stroke-width="1.4"><path d="M3,8 H10 Q10,5 13,5 Q15,5 15,8 V13 Q12,13 12,16 Q12,19 15,19 V26 H3 Z"/><path d="M15,19 Q18,19 18,16 Q18,13 15,13 V13 H22 V26 H15"/><path d="M15,8 L21,2 L27,8 L21,14 Q19,12 17,14 Q15,12 17,10 Z"/></g></g></svg>
</div></body></html>
